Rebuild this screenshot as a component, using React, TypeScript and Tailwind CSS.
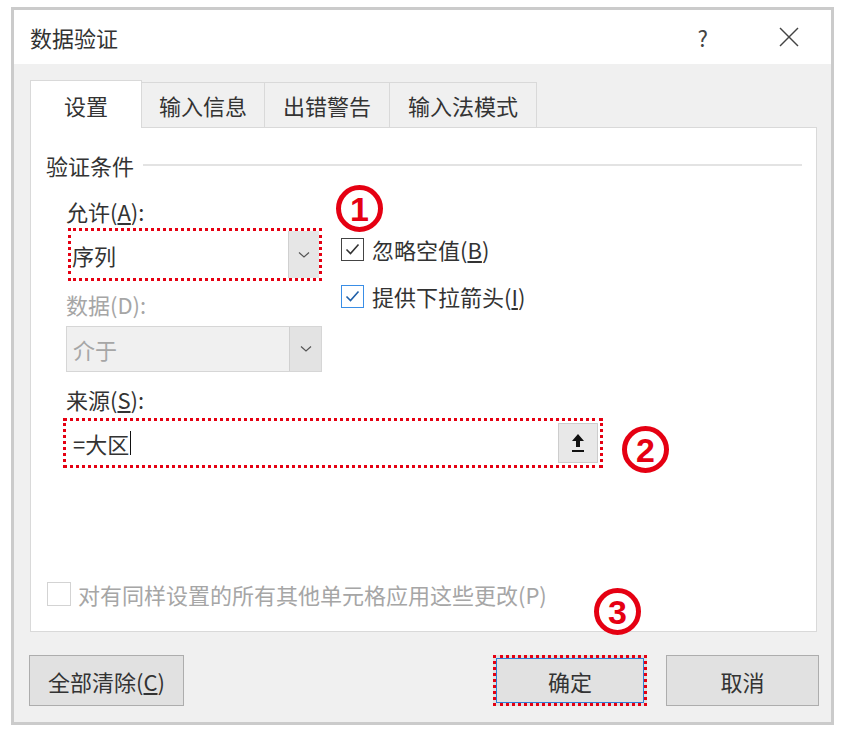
import React from "react";

function Chevron() {
  return (
    <svg width="12" height="8" viewBox="0 0 12 8">
      <polyline points="1,1.5 6,6 11,1.5" fill="none" stroke="#555" strokeWidth="1.2" />
    </svg>
  );
}

function Check({ color }: { color: string }) {
  return (
    <svg width="17" height="17" viewBox="0 0 17 17">
      <polyline points="2.5,8.5 6.5,12.5 14.5,3.5" fill="none" stroke={color} strokeWidth="1.6" />
    </svg>
  );
}

function Circled({ n }: { n: string }) {
  return (
    <div className="w-[47px] h-[47px] rounded-full border-[5px] border-[#e50012] flex items-center justify-center">
      <span className="font-['Liberation_Sans',Arial,sans-serif] font-bold text-[34px] leading-none text-[#e50012]">{n}</span>
    </div>
  );
}

export default function App() {
  return (
    <div className="w-[841px] h-[731px] bg-white pl-[11px] pt-[7px] font-['Noto_Sans_CJK_SC','Noto_Sans',sans-serif] text-[#333]">
      <div className="relative w-[823px] h-[718px] border-[3px] border-[#cbcbcb] flex flex-col">
        {/* Title bar */}
        <div className="h-[54px] bg-white flex items-center pl-[16px] pr-[31px]">
          <div className="text-[22px] leading-none">数据验证</div>
          <div className="ml-auto text-[22px] leading-none text-[#444]">?</div>
          <svg className="ml-[70px]" width="22" height="22" viewBox="0 0 22 22">
            <line x1="2" y1="2" x2="20" y2="20" stroke="#444" strokeWidth="1.4" />
            <line x1="20" y1="2" x2="2" y2="20" stroke="#444" strokeWidth="1.4" />
          </svg>
        </div>

        {/* Body */}
        <div className="flex-1 bg-[#f0f0f0] pl-[16px] pr-[14px] pt-[16px] pb-[16px] flex flex-col">
          {/* Tabs */}
          <div className="h-[47px] flex items-end">
            <div className="relative z-10 w-[112px] h-[48px] -mb-px bg-white border border-b-0 border-[#d9d9d9] flex items-center justify-center text-[22px] leading-none">
              设置
            </div>
            <div className="w-[123px] h-[45px] border border-b-0 border-l-0 border-[#d9d9d9] flex items-center justify-center text-[22px] leading-none">
              输入信息
            </div>
            <div className="w-[125px] h-[45px] border border-b-0 border-l-0 border-[#d9d9d9] flex items-center justify-center text-[22px] leading-none">
              出错警告
            </div>
            <div className="w-[147px] h-[45px] border border-b-0 border-l-0 border-[#d9d9d9] flex items-center justify-center text-[22px] leading-none">
              输入法模式
            </div>
          </div>

          {/* Panel */}
          <div className="w-[787px] h-[505px] bg-white border border-[#d9d9d9] flex flex-col">
            {/* Group header */}
            <div className="mt-[23px] h-[28px] pl-[15px] pr-[14px] flex items-center">
              <span className="text-[22px] leading-none">验证条件</span>
              <div className="ml-[9px] flex-1 h-[2px] bg-[#e3e3e3]" />
            </div>

            {/* Two columns */}
            <div className="mt-[20px] flex pl-[35px]">
              <div className="w-[256px] flex flex-col">
                <div className="h-[24px] flex items-center text-[22px] leading-none">
                  允许(<span className="underline underline-offset-2">A</span>):
                </div>
                <div className="mt-[5px] ml-[2px] h-[53px] border-[3px] border-dotted border-[#e50012] flex">
                  <div className="flex-1 flex items-center pl-[1px] text-[22px] leading-none">序列</div>
                  <div className="w-[31px] bg-[#e6e6e6] border-l border-[#d0d0d0] flex items-center justify-center">
                    <Chevron />
                  </div>
                </div>
                <div className="mt-[11px] h-[24px] flex items-center text-[22px] leading-none text-[#a6a6a6]">
                  数据(D):
                </div>
                <div className="mt-[10px] h-[46px] bg-[#f0f0f0] border border-[#d6d6d6] flex">
                  <div className="flex-1 flex items-center pl-[6px] text-[22px] leading-none text-[#a6a6a6]">介于</div>
                  <div className="w-[32px] bg-[#e3e3e3] border-l border-[#d0d0d0] flex items-center justify-center">
                    <Chevron />
                  </div>
                </div>
              </div>

              <div className="ml-[19px] flex flex-col">
                <div className="mt-[38px] h-[24px] flex items-center">
                  <div className="w-[23px] h-[23px] border border-[#444] bg-white flex items-center justify-center">
                    <Check color="#333" />
                  </div>
                  <span className="ml-[8px] text-[22px] leading-none">
                    忽略空值(<span className="underline underline-offset-2">B</span>)
                  </span>
                </div>
                <div className="mt-[23px] h-[24px] flex items-center">
                  <div className="w-[23px] h-[23px] border border-[#3a8ee6] bg-white flex items-center justify-center">
                    <Check color="#1f5fa8" />
                  </div>
                  <span className="ml-[8px] text-[22px] leading-none">
                    提供下拉箭头(<span className="underline underline-offset-2">I</span>)
                  </span>
                </div>
              </div>
            </div>

            {/* Source */}
            <div className="mt-[15px] pl-[35px] h-[24px] flex items-center text-[22px] leading-none">
              来源(<span className="underline underline-offset-2">S</span>):
            </div>
            <div className="mt-[7px] ml-[32px] w-[540px] h-[50px] border-[3px] border-dotted border-[#e50012] flex items-center">
              <div className="flex-1 flex items-center pl-[7px] text-[22px] leading-none">
                =大区<span className="inline-block w-px h-[24px] bg-[#111] ml-px" />
              </div>
              <div className="mr-[2px] w-[40px] h-[40px] bg-[#e8e8e8] border border-[#cdcdcd] flex items-center justify-center">
                <svg width="16" height="24" viewBox="0 0 16 24">
                  <polygon points="8,3 2,10 6,10 6,16 10,16 10,10 14,10" fill="#111" />
                  <line x1="2" y1="20" x2="14" y2="20" stroke="#111" strokeWidth="2" />
                </svg>
              </div>
            </div>

            {/* Bottom checkbox */}
            <div className="mt-[113px] ml-[16px] h-[25px] flex items-center">
              <div className="w-[24px] h-[24px] border border-[#d3d3d3] bg-white" />
              <span className="ml-[7px] text-[22px] leading-none text-[#a6a6a6]">
                对有同样设置的所有其他单元格应用这些更改(P)
              </span>
            </div>
          </div>

          {/* Buttons */}
          <div className="mt-[23px] h-[51px] flex -ml-[1px] -mr-[2px]">
            <button className="w-[155px] h-[51px] bg-[#e1e1e1] border border-[#adadad] text-[22px] leading-none text-[#333]">
              全部清除(<span className="underline underline-offset-2">C</span>)
            </button>
            <div className="flex-1" />
            <button className="w-[154px] h-[51px] bg-[#e1e1e1] border-[3px] border-dotted border-[#e50012] shadow-[inset_0_0_0_1px_#2f7fd6] text-[22px] leading-none text-[#333]">
              确定
            </button>
            <button className="ml-[19px] w-[153px] h-[51px] bg-[#e1e1e1] border border-[#adadad] text-[22px] leading-none text-[#333]">
              取消
            </button>
          </div>
        </div>

        {/* Annotations */}
        <div className="absolute left-[322px] top-[175px]">
          <Circled n="1" />
        </div>
        <div className="absolute left-[608px] top-[416px]">
          <Circled n="2" />
        </div>
        <div className="absolute left-[580px] top-[578px]">
          <Circled n="3" />
        </div>
      </div>
    </div>
  );
}
